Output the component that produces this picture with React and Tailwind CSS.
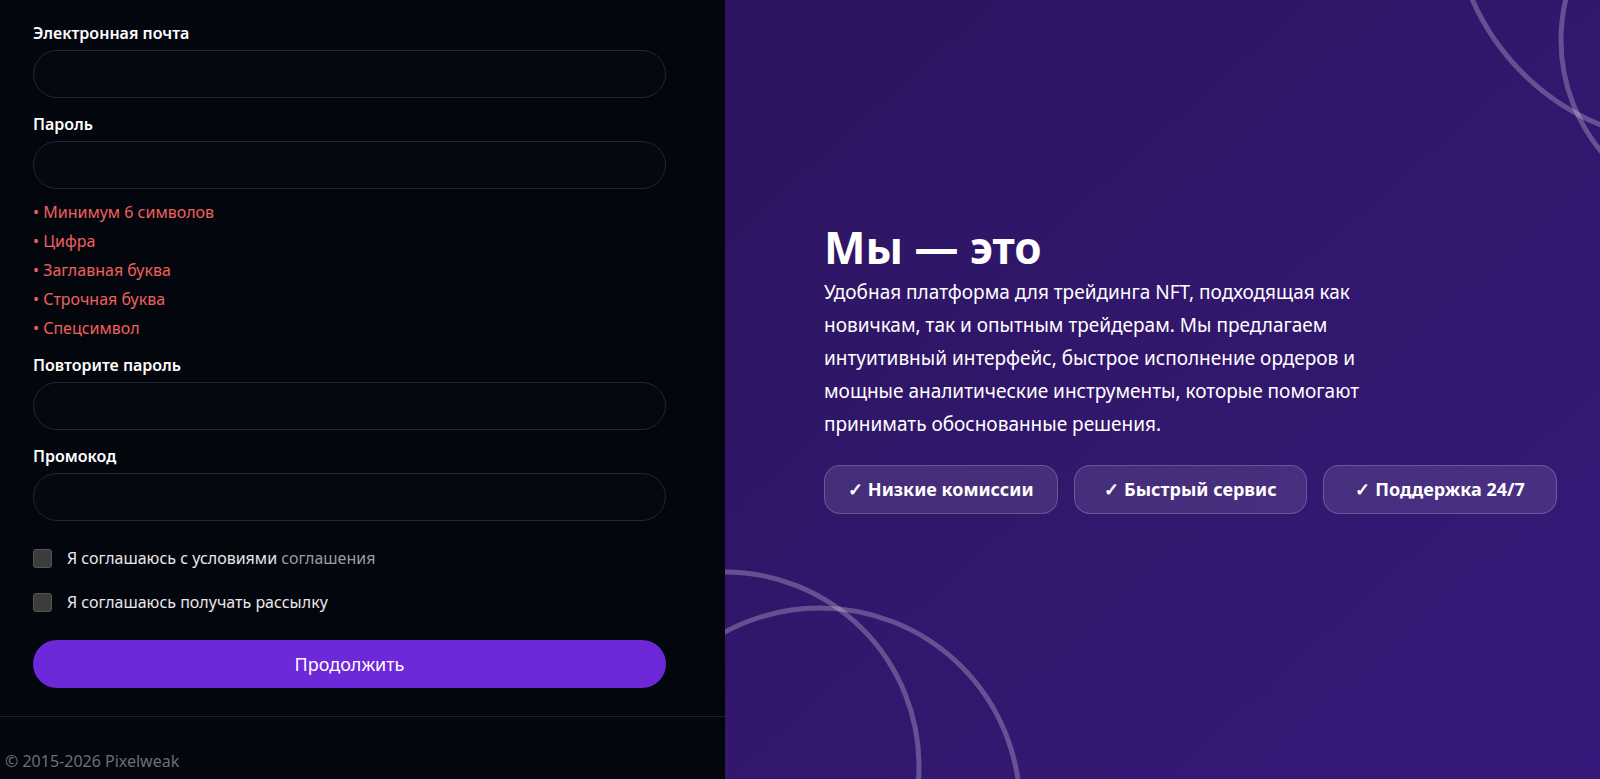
import React from 'react';

const font = { fontFamily: '"Noto Sans", "Open Sans", sans-serif' };

const Field = ({ label, className = '' }) => (
  <div className={`flex flex-col ${className}`}>
    <label className="text-[16px] leading-[18px] font-semibold text-white mb-[8px]">{label}</label>
    <input className="h-[48px] w-full rounded-full border border-[#23262f] bg-[#060810] px-5 text-white outline-none" />
  </div>
);

const rules = ['Минимум 6 символов', 'Цифра', 'Заглавная буква', 'Строчная буква', 'Спецсимвол'];
const perks = ['Низкие комиссии', 'Быстрый сервис', 'Поддержка 24/7'];

const Checkbox = ({ children, className = '' }) => (
  <label className={`flex items-center h-[24px] ${className}`}>
    <span className="w-[19px] h-[19px] rounded-[3px] bg-[#3c3c3c] border border-[#555] shrink-0" />
    <span className="ml-[15px] text-[16px] text-[#e8e8ea]">{children}</span>
  </label>
);

export default function App() {
  return (
    <div className="flex h-[779px] w-full overflow-hidden bg-[#04060e]" style={font}>
      <div className="w-[725px] shrink-0 flex flex-col bg-[#04060e]">
        <div className="h-[717px] shrink-0 border-b border-[#1d2029] px-[33px] pt-[24px]">
          <div className="w-[633px] flex flex-col">
            <Field label="Электронная почта" />
            <Field label="Пароль" className="mt-[17px]" />
            <ul className="mt-[9px] text-[16px] leading-[29px] text-[#f0605c]">
              {rules.map(r => (
                <li key={r}>• {r}</li>
              ))}
            </ul>
            <Field label="Повторите пароль" className="mt-[13px]" />
            <Field label="Промокод" className="mt-[17px]" />
            <Checkbox className="mt-[25px]">
              Я соглашаюсь с условиями <span className="text-[#9a9ca3]">соглашения</span>
            </Checkbox>
            <Checkbox className="mt-[20px]">Я соглашаюсь получать рассылку</Checkbox>
            <button className="mt-[26px] h-[48px] w-full rounded-full bg-[#6d28d9] text-[18px] text-white">
              Продолжить
            </button>
          </div>
        </div>
        <div className="px-[5px] pt-[32px] text-[16px] text-[#6b6f78]">© 2015-2026 Pixelweak</div>
      </div>

      <div className="relative flex-1 overflow-hidden bg-gradient-to-br from-[#2c1460] via-[#32176d] to-[#36197a]">
        <svg className="absolute inset-0 w-full h-full pointer-events-none" fill="none" stroke="white" strokeOpacity="0.25" strokeWidth="5">
          <circle cx="967" cy="-97" r="240" />
          <circle cx="1011" cy="40" r="175" />
          <circle cx="0" cy="766" r="194" />
          <circle cx="95" cy="808" r="200" />
        </svg>
        <div className="relative pl-[99px] pt-[221px]">
          <h1 className="text-[44px] leading-[53px] font-bold text-white">Мы — это</h1>
          <p className="mt-[2px] text-[19px] leading-[33px] text-white whitespace-nowrap">
            Удобная платформа для трейдинга NFT, подходящая как<br />
            новичкам, так и опытным трейдерам. Мы предлагаем<br />
            интуитивный интерфейс, быстрое исполнение ордеров и<br />
            мощные аналитические инструменты, которые помогают<br />
            принимать обоснованные решения.
          </p>
          <div className="mt-[24px] grid grid-cols-3 gap-4 w-[733px]">
            {perks.map(p => (
              <div
                key={p}
                className="h-[49px] rounded-2xl bg-white/10 border border-white/20 flex items-center justify-center text-[18px] font-bold text-white"
              >
                ✓ {p}
              </div>
            ))}
          </div>
        </div>
      </div>
    </div>
  );
}
